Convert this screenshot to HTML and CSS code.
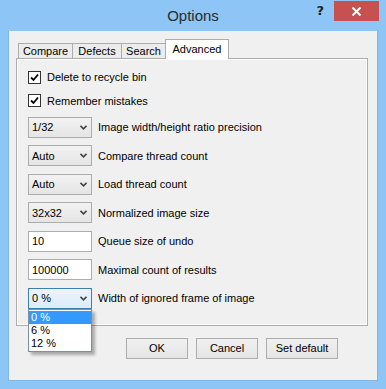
FILE: index.html
```html
<!DOCTYPE html>
<html lang="en">
<head>
    <meta charset="UTF-8">
    <meta name="viewport" content="width=device-width, initial-scale=1.0">
    <title>Options</title>
    <link rel="stylesheet" href="styles.css">
</head>
<body>
    <div class="window">
        <!-- Title bar -->
        <div class="titlebar">
            <span></span>
            <span class="title">Options</span>
            <div class="controls">
                <span class="help">?</span>
                <span class="close">
                    <svg width="11" height="9" viewBox="0 0 11 9"><path d="M1.5 0.5 L9.5 8.5 M9.5 0.5 L1.5 8.5" stroke="#fff" stroke-width="2"/></svg>
                </span>
            </div>
        </div>

        <div class="client">
            <!-- Tabs -->
            <div class="tabs">
                <div class="tab tab-compare">Compare</div>
                <div class="tab tab-defects">Defects</div>
                <div class="tab tab-search">Search</div>
                <div class="tab tab-advanced active">Advanced</div>
            </div>

            <div class="panel">
                <div class="checks">
                    <label class="check-row"><span class="checkbox"><svg width="11" height="11" viewBox="0 0 11 11"><path d="M2 5.5 L4.5 8 L9 2.5" fill="none" stroke="#000" stroke-width="1.8"/></svg></span>Delete to recycle bin</label>
                    <label class="check-row"><span class="checkbox"><svg width="11" height="11" viewBox="0 0 11 11"><path d="M2 5.5 L4.5 8 L9 2.5" fill="none" stroke="#000" stroke-width="1.8"/></svg></span>Remember mistakes</label>
                </div>

                <div class="fields">
                    <div class="field">
                        <div class="combo"><span>1/32</span><svg class="arrow" width="7" height="5" viewBox="0 0 7 5"><path d="M0.5 0.8 L3.5 3.8 L6.5 0.8" fill="none" stroke="#444" stroke-width="1.6"/></svg></div>
                        <span class="label">Image width/height ratio precision</span>
                    </div>
                    <div class="field">
                        <div class="combo"><span>Auto</span><svg class="arrow" width="7" height="5" viewBox="0 0 7 5"><path d="M0.5 0.8 L3.5 3.8 L6.5 0.8" fill="none" stroke="#444" stroke-width="1.6"/></svg></div>
                        <span class="label">Compare thread count</span>
                    </div>
                    <div class="field">
                        <div class="combo"><span>Auto</span><svg class="arrow" width="7" height="5" viewBox="0 0 7 5"><path d="M0.5 0.8 L3.5 3.8 L6.5 0.8" fill="none" stroke="#444" stroke-width="1.6"/></svg></div>
                        <span class="label">Load thread count</span>
                    </div>
                    <div class="field">
                        <div class="combo"><span>32x32</span><svg class="arrow" width="7" height="5" viewBox="0 0 7 5"><path d="M0.5 0.8 L3.5 3.8 L6.5 0.8" fill="none" stroke="#444" stroke-width="1.6"/></svg></div>
                        <span class="label">Normalized image size</span>
                    </div>
                    <div class="field">
                        <div class="textbox">10</div>
                        <span class="label">Queue size of undo</span>
                    </div>
                    <div class="field">
                        <div class="textbox">100000</div>
                        <span class="label">Maximal count of results</span>
                    </div>
                    <div class="field">
                        <div class="combo focused">
                            <span>0 %</span><svg class="arrow" width="7" height="5" viewBox="0 0 7 5"><path d="M0.5 0.8 L3.5 3.8 L6.5 0.8" fill="none" stroke="#444" stroke-width="1.6"/></svg>
                            <!-- Open dropdown list -->
                            <ul class="dropdown">
                                <li class="selected">0 %</li>
                                <li>6 %</li>
                                <li>12 %</li>
                            </ul>
                        </div>
                        <span class="label">Width of ignored frame of image</span>
                    </div>
                </div>
            </div>

            <!-- Dialog buttons -->
            <div class="buttons">
                <div class="button btn-ok">OK</div>
                <div class="button btn-cancel">Cancel</div>
                <div class="button btn-default">Set default</div>
            </div>
        </div>
    </div>
</body>
</html>
```

FILE: styles.css
```css
body {
    margin: 0;
    padding: 0;
    font-family: "Liberation Sans", Arial, sans-serif;
    font-size: 11px;
    color: #000;
    background-color: #8dc6f6;
}

.window {
    width: 386px;
    height: 389px;
    background-color: #8dc6f6;
    display: flex;
    flex-direction: column;
    overflow: hidden;
}

/* Title bar */
.titlebar {
    height: 31px;
    display: grid;
    grid-template-columns: 1fr auto 1fr;
    align-items: start;
}

.title {
    font-size: 15px;
    color: #2b2b2b;
    line-height: 31px;
}

.controls {
    display: flex;
    justify-content: flex-end;
    align-items: flex-start;
    padding-top: 1px;
    padding-right: 7px;
}

.help {
    font-family: "DejaVu Sans", sans-serif;
    font-size: 13px;
    font-weight: bold;
    color: #222;
    line-height: 20px;
    margin-right: 10px;
}

.close {
    width: 45px;
    height: 20px;
    background-color: #c75050;
    display: flex;
    align-items: center;
    justify-content: center;
}

/* Client area */
.client {
    flex: 1;
    margin: 0 8px 8px 8px;
    background-color: #f0f0f0;
    border: 1px solid #80b6e6;
    border-top: none;
    padding: 8px 9px 0 7px;
    display: flex;
    flex-direction: column;
}

.tabs {
    display: flex;
    align-items: flex-end;
    height: 19px;
    padding-left: 2px;
    position: relative;
    z-index: 1;
}

.tab {
    height: 15px;
    line-height: 15px;
    text-align: center;
    border: 1px solid #acacac;
    border-bottom: none;
    background-color: #ececec;
    margin-right: -1px;
    box-sizing: border-box;
}

.tab-compare { width: 55px; }
.tab-defects { width: 50px; }
.tab-search { width: 45px; }

.tab.active {
    width: 64px;
    height: 20px;
    line-height: 19px;
    margin-bottom: -1px;
    background-color: #fff;
}

.panel {
    height: 268px;
    box-sizing: border-box;
    border: 1px solid #acacac;
    box-shadow: inset 0 0 0 1px #fff;
    padding: 10px 0 0 11px;
}

.checks {
    display: flex;
    flex-direction: column;
    gap: 7.5px;
}

.check-row {
    height: 16px;
    display: flex;
    align-items: center;
    gap: 6px;
}

.checkbox {
    width: 13px;
    height: 13px;
    box-sizing: border-box;
    border: 1px solid #333;
    background-color: #fff;
    display: flex;
    align-items: center;
    justify-content: center;
}

.fields {
    margin-top: 8px;
    display: flex;
    flex-direction: column;
    gap: 7.5px;
}

.field {
    height: 21px;
    display: flex;
    align-items: center;
    gap: 6px;
}

.combo, .textbox {
    width: 64px;
    height: 21px;
    box-sizing: border-box;
    border: 1px solid #acacac;
    padding-left: 3px;
    display: flex;
    align-items: center;
    position: relative;
}

.combo {
    background: linear-gradient(#f2f2f2, #e5e5e5);
    justify-content: space-between;
    padding-right: 4px;
}

.combo.focused {
    border-color: #3c7fb1;
    background: linear-gradient(#ecf4fc, #dcecfc);
}

.textbox {
    background-color: #fff;
    border-color: #abadb3;
}

.dropdown {
    position: absolute;
    top: 20px;
    left: -1px;
    width: 64px;
    box-sizing: border-box;
    margin: 0;
    padding: 1px 0;
    list-style: none;
    background-color: #fff;
    border: 1px solid #7a8ea6;
    box-shadow: 3px 3px 3px rgba(0, 0, 0, 0.3);
    z-index: 2;
}

.dropdown li {
    height: 13px;
    line-height: 13px;
    padding-left: 2px;
}

.dropdown li.selected {
    background-color: #3399ff;
    color: #fff;
}

/* Buttons */
.buttons {
    display: flex;
    justify-content: flex-end;
    gap: 8px;
    margin-top: 12px;
    padding-right: 30px;
}

.button {
    height: 21px;
    line-height: 19px;
    box-sizing: border-box;
    text-align: center;
    border: 1px solid #adadad;
    background: linear-gradient(#f0f0f0, #e5e5e5);
}

.btn-ok, .btn-cancel { width: 62px; }
.btn-default { width: 72px; }
```
